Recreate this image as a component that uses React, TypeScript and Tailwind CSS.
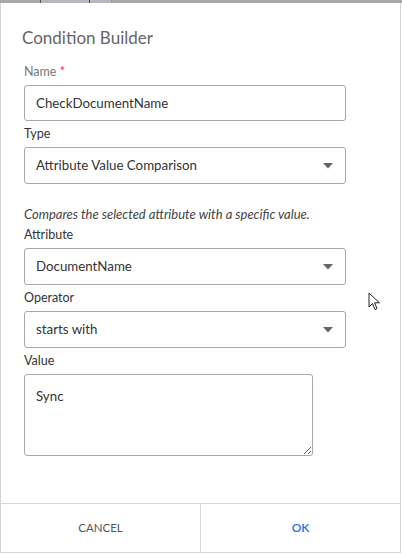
import { useState } from "react"

const font = { fontFamily: "Lato, 'Liberation Sans', sans-serif" }

function Caret() {
    return (
        <svg width="10" height="6" viewBox="0 0 10 6" className="absolute right-[12px] top-1/2 -translate-y-1/2">
            <path d="M0 0 H10 L5 5.5 Z" fill="#666" />
        </svg>
    )
}

function SelectBox({ value }: { value: string }) {
    return (
        <div className="relative flex h-[37px] w-[322px] items-center rounded-[3px] border border-[#a8a8a8] bg-white pl-[11px] text-[13.3px] text-[#333]">
            {value}
            <Caret />
        </div>
    )
}

function Label({ children, className = "" }: { children: React.ReactNode; className?: string }) {
    return <label className={"mt-[5px] mb-[5px] text-[12.5px] leading-[16px] text-[#333] " + className}>{children}</label>
}

export default function App() {
    const [name, setName] = useState("CheckDocumentName")
    const [val, setVal] = useState("Sync")

    return (
        <div className="relative h-[554px] w-[402px] bg-white" style={font}>
            {/* strip of the page behind the dialog */}
            <div className="flex h-[3px] bg-[#a9a9a9]">
                <div className="w-[40px]" />
                <div className="w-[1px] bg-[#555]" />
                <div className="w-[48px] bg-[#b4b8bd]" />
                <div className="w-[1px] bg-[#444]" />
                <div className="w-[21px] bg-[#b4b8bd]" />
                <div className="w-[1px] bg-[#8fa0b4]" />
            </div>

            <div className="flex h-[550px] w-[401px] flex-col border-x border-b border-[#d4d4d4]">
                <div className="px-[21px] pt-[24px] text-[17px] leading-[22px] text-[#666]">Condition Builder</div>

                <div className="flex flex-1 flex-col px-[23px] pt-[10px]">
                    <Label className="text-[#777]">
                        Name <span className="text-[#e53935]">*</span>
                    </Label>
                    <input
                        value={name}
                        onChange={(e) => setName(e.target.value)}
                        className="h-[36px] w-[322px] rounded-[3px] border border-[#a8a8a8] pl-[11px] text-[13.3px] text-[#333] outline-none"
                    />

                    <Label>Type</Label>
                    <SelectBox value="Attribute Value Comparison" />

                    <p className="mt-[22px] text-[13px] italic leading-[16px] text-[#444]">
                        Compares the selected attribute with a specific value.
                    </p>
                    <Label>Attribute</Label>
                    <SelectBox value="DocumentName" />

                    <Label>Operator</Label>
                    <SelectBox value="starts with" />

                    <Label>Value</Label>
                    <textarea
                        value={val}
                        onChange={(e) => setVal(e.target.value)}
                        className="h-[82px] w-[289px] rounded-[3px] border border-[#a8a8a8] px-[11px] pt-[12px] text-[13.3px] text-[#333] outline-none"
                    />
                </div>

                <div className="flex h-[49px] border-t border-[#d8d8d8]">
                    <button className="flex-1 border-r border-[#d8d8d8] text-[11.5px] text-[#555]">CANCEL</button>
                    <button className="flex-1 text-[12px] font-semibold text-[#1a73e8]">OK</button>
                </div>
            </div>

            {/* mouse pointer */}
            <svg width="14" height="20" viewBox="0 0 14 20" className="absolute left-[368px] top-[292px]">
                <path d="M1 1 V15 L4.5 11.5 L7 17.5 L9 16.6 L6.6 10.8 H11.5 Z" fill="#fff" stroke="#222" strokeWidth="1" strokeLinejoin="round" />
            </svg>
        </div>
    )
}
